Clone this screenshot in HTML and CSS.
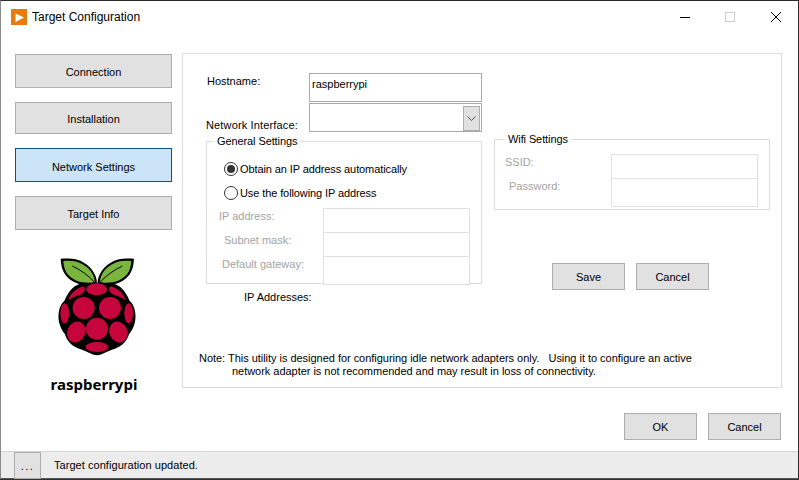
FILE: index.html
```html
<!DOCTYPE html>
<html lang="en">
<head>
<meta charset="utf-8">
<title>Target Configuration</title>
<link rel="stylesheet" href="styles.css">
</head>
<body>
<div class="window">
  <header class="titlebar">
    <svg class="app-icon" viewBox="0 0 16 16"><rect width="16" height="16" fill="#e87b0c"/><path d="M4.5 4.5 13 8.5 4.5 13Z" fill="#fff"/></svg>
    <span class="title">Target Configuration</span>
    <div class="controls">
      <svg class="ctl" viewBox="0 0 10 10"><path d="M0 5.5H10" stroke="#000" fill="none"/></svg>
      <svg class="ctl" viewBox="0 0 10 10"><rect x=".5" y=".5" width="9" height="9" stroke="#ccc" fill="none"/></svg>
      <svg class="ctl ctl-close" viewBox="0 0 10 10"><path d="M0 0 10 10M10 0 0 10" stroke="#000" fill="none"/></svg>
    </div>
  </header>
  <div class="main">
    <nav class="sidebar">
      <button class="btn nav">Connection</button>
      <button class="btn nav short">Installation</button>
      <button class="btn nav selected">Network Settings</button>
      <button class="btn nav">Target Info</button>
      <svg class="logo" viewBox="0 30 330 315">
        <path d="M174 112C150 102 125 110 105 122 90 135 82 150 76 165 60 178 56 205 60 228 64 245 70 255 78 265 84 285 98 300 120 308 140 314 158 326 174 328 190 326 208 314 228 308 250 300 264 285 270 265 278 255 284 245 288 228 292 205 288 178 272 165 266 150 258 135 243 122 223 110 198 102 174 112Z" fill="#000"/>
        <path d="M174 116C176 85 150 50 110 40 95 36 80 38 65 38 66 55 68 65 74 78 84 98 105 112 130 116 145 118 165 120 174 116Z" fill="#000"/>
        <path d="M176 116C174 85 200 50 240 40 255 36 270 38 285 38 284 55 282 65 276 78 266 98 245 112 220 116 205 118 185 120 176 116Z" fill="#000"/>
        <path d="M167 108C168 85 145 55 108 46 95 43 84 44 73 45 74 58 76 68 81 77 90 93 108 105 130 109 145 111 158 111 167 108Z" fill="#7ab53e"/>
        <path d="M183 108C182 85 205 55 242 46 255 43 266 44 277 45 276 58 274 68 269 77 260 93 242 105 220 109 205 111 192 111 183 108Z" fill="#7ab53e"/>
        <path d="M100 60C125 72 148 88 166 108M250 60C225 72 202 88 184 108" stroke="#000" stroke-width="3" fill="none"/>
        <g fill="#c7053d">
          <ellipse cx="173" cy="130" rx="31" ry="18"/>
          <path d="M88 163C92 145 112 128 132 121 142 126 138 140 124 146 110 150 96 156 88 163Z"/>
          <path d="M260 163C256 145 236 128 216 121 206 126 210 140 224 146 238 150 252 156 260 163Z"/>
          <circle cx="134" cy="186" r="33"/>
          <circle cx="213" cy="186" r="33"/>
          <ellipse cx="77" cy="202" rx="13" ry="30"/>
          <ellipse cx="269" cy="202" rx="13" ry="30"/>
          <circle cx="174" cy="248" r="33"/>
          <ellipse cx="112" cy="258" rx="27" ry="32" transform="rotate(25 112 258)"/>
          <ellipse cx="238" cy="258" rx="27" ry="32" transform="rotate(-25 238 258)"/>
          <ellipse cx="174" cy="303" rx="34" ry="15"/>
        </g>
      </svg>
      <div class="target-name">raspberrypi</div>
    </nav>
    <section class="panel">
      <div class="columns">
        <div class="col-left">
          <div class="row">
            <label class="row-label host-label">Hostname:</label>
            <div class="input hostname">raspberrypi</div>
          </div>
          <div class="row">
            <label class="row-label iface-label">Network Interface:</label>
            <div class="input select">
              <span class="select-btn"><svg width="9" height="5" viewBox="0 0 9 5"><path d="M.5.5 4.5 4.5 8.5.5" stroke="#555" fill="none"/></svg></span>
            </div>
          </div>
          <div class="group general">
            <span class="legend">General Settings</span>
            <div class="radio-row"><span class="radio checked"></span>Obtain an IP address automatically</div>
            <div class="radio-row"><span class="radio"></span>Use the following IP address</div>
            <div class="fields ip-fields">
              <div class="field"><span class="field-label lbl-ip">IP address:</span><div class="box"></div></div>
              <div class="field"><span class="field-label lbl-mask">Subnet mask:</span><div class="box"></div></div>
              <div class="field last"><span class="field-label lbl-gw">Default gateway:</span><div class="box"></div></div>
            </div>
          </div>
          <div class="ip-addresses">IP Addresses:</div>
        </div>
        <div class="col-right">
          <div class="group wifi">
            <span class="legend">Wifi Settings</span>
            <div class="fields wifi-fields">
              <div class="field"><span class="field-label lbl-ssid">SSID:</span><div class="box"></div></div>
              <div class="field last"><span class="field-label lbl-pw">Password:</span><div class="box"></div></div>
            </div>
          </div>
          <div class="save-row">
            <button class="btn action">Save</button>
            <button class="btn action">Cancel</button>
          </div>
        </div>
      </div>
      <div class="note">
        <div class="note-first">Note: This utility is designed for configuring idle network adapters only.   Using it to configure an active</div>
        <div class="note-second">network adapter is not recommended and may result in loss of connectivity.</div>
      </div>
    </section>
  </div>
  <div class="dialog-actions">
    <button class="btn action">OK</button>
    <button class="btn action">Cancel</button>
  </div>
  <footer class="status">
    <button class="btn more">...</button>
    <span class="status-text">Target configuration updated.</span>
  </footer>
</div>
</body>
</html>
```

FILE: styles.css
```css
* { box-sizing: border-box; }
html, body { margin: 0; padding: 0; }
body { width: 799px; height: 480px; overflow: hidden; background: #333; font-family: "Liberation Sans", Arial, sans-serif; font-size: 11px; color: #000; }
.window { width: 799px; height: 479px; display: flex; flex-direction: column; background: #fff; border-top: 1px solid #2b2b2b; border-left: 1px solid #8a8a8a; border-right: 1px solid #2b2b2b; border-bottom: 1px solid #555; }
.titlebar { height: 31px; flex: none; display: flex; align-items: center; padding-left: 10px; }
.app-icon { width: 16px; height: 16px; flex: none; }
.title { margin-left: 5px; font-size: 12px; }
.controls { margin-left: auto; display: flex; gap: 35px; padding-right: 17px; }
.ctl { width: 10px; height: 10px; display: block; }
.ctl-close { margin-left: 1px; }
.main { flex: none; height: 335px; margin-top: 21px; display: flex; padding-left: 14px; gap: 10px; }
.sidebar { width: 157px; flex: none; display: flex; flex-direction: column; padding-top: 1px; }
.btn { font: inherit; color: #000; background: #e1e1e1; border: 1px solid #adadad; padding: 0; margin: 0; border-radius: 0; }
.nav { height: 34px; margin-bottom: 14px; flex: none; padding-top: 2px; }
.nav.short { height: 32px; }
.nav.selected { background: #cce4f7; border-color: #005499; padding-top: 4px; }
.logo { width: 110px; height: 105px; margin: 12px 0 0 24px; display: block; flex: none; }
.target-name { margin-top: 13px; text-align: center; font-family: "Noto Sans", sans-serif; font-weight: 700; font-size: 15px; line-height: 20px; margin-left: 1px; }
.panel { width: 600px; height: 335px; border: 1px solid #dcdcdc; display: flex; flex-direction: column; }
.columns { display: flex; padding-left: 23px; gap: 12px; }
.col-left { width: 276px; flex: none; display: flex; flex-direction: column; padding-top: 19px; }
.col-right { width: 276px; flex: none; padding-top: 85px; }
.row { display: flex; }
.row + .row { margin-top: 1px; }
.row-label { width: 103px; flex: none; }
.host-label { padding-left: 1px; line-height: 16px; }
.iface-label { line-height: 16px; padding-top: 14px; letter-spacing: .15px; white-space: nowrap; }
.input { width: 173px; border: 1px solid #a9a9a9; }
.hostname { height: 29px; padding: 2px; line-height: 16px; }
.select { height: 29px; padding: 2px 1px 1px 0; display: flex; justify-content: flex-end; }
.select-btn { width: 17px; height: 25px; background: #e1e1e1; border: 1px solid #adadad; display: flex; align-items: center; justify-content: center; }
.group { border: 1px solid #dcdcdc; display: flex; flex-direction: column; }
.legend { align-self: flex-start; background: #fff; margin: -9px 0 0 7px; padding: 0 3px; line-height: 16px; letter-spacing: -.1px; }
.general { height: 143px; margin-top: 8px; }
.radio-row { height: 24px; display: flex; align-items: center; margin-left: 17px; letter-spacing: -.1px; }
.legend + .radio-row { margin-top: 8px; }
.radio { width: 14px; height: 14px; border: 1px solid #333; border-radius: 50%; margin-right: 2px; flex: none; display: flex; align-items: center; justify-content: center; }
.radio.checked::before { content: ""; width: 8px; height: 8px; border-radius: 50%; background: #333; }
.fields { display: flex; flex-direction: column; }
.field { display: flex; height: 24px; }
.field-label { color: #a3a3a3; line-height: 16px; }
.box { width: 147px; height: 25px; border: 1px solid #e0e0e0; background: #fff; }
.field.last .box { height: 29px; }
.ip-fields { margin-top: 3px; }
.ip-fields .field { justify-content: flex-end; padding-right: 11px; }
.ip-fields .field-label { margin-right: auto; }
.lbl-ip { margin-left: 12px; }
.lbl-mask { margin-left: 17px; }
.lbl-gw { margin-left: 15px; }
.lbl-ssid { margin-left: 10px; }
.lbl-pw { margin-left: 14px; }
.ip-addresses { margin: 5px 0 0 38px; line-height: 16px; }
.wifi { height: 71px; width: 276px; }
.wifi .legend { margin-left: 10px; }
.wifi-fields { margin-top: 7px; }
.wifi-fields .field { justify-content: flex-end; padding-right: 11px; }
.wifi-fields .field-label { margin-right: auto; }
.save-row { display: flex; gap: 11px; margin: 53px 0 0 58px; }
.action { width: 73px; height: 27px; flex: none; }
.note { margin-top: auto; padding: 0 0 9px 16px; line-height: 13px; letter-spacing: -.03px; }
.note-first { white-space: pre; }
.note-second { padding-left: 33px; }
.dialog-actions { flex: none; height: 63px; display: flex; justify-content: flex-end; gap: 11px; padding: 25px 17px 0 0; }
.status { flex: 1; background: #ececec; border-top: 1px solid #d4d4d4; display: flex; align-items: center; padding-left: 13px; min-height: 0; }
.more { width: 27px; height: 27px; margin-bottom: -1px; flex: none; letter-spacing: 1.5px; }
.status-text { margin-left: 13px; letter-spacing: .05px; }
```
